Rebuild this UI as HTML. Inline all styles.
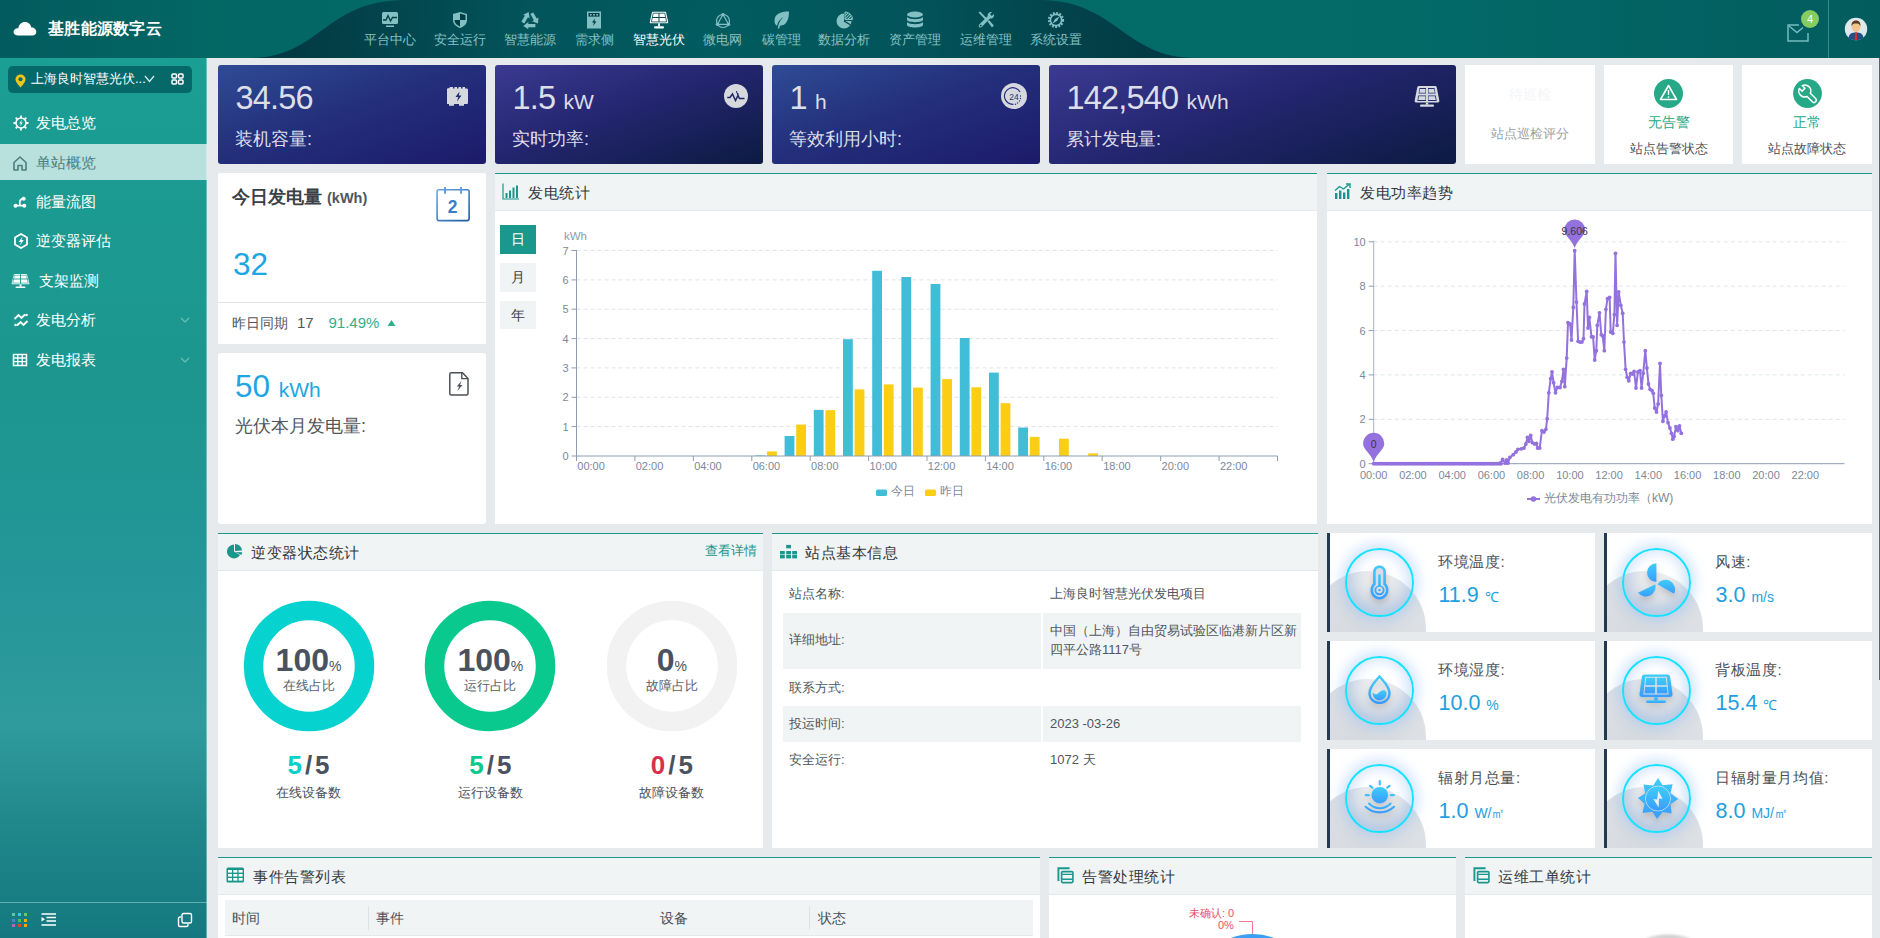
<!DOCTYPE html>
<html><head><meta charset="utf-8">
<style>
*{box-sizing:border-box;margin:0;padding:0}
html,body{width:1880px;height:938px;overflow:hidden}
body{font-family:"Liberation Sans",sans-serif;background:#e6eaed;position:relative;color:#333}
.abs{position:absolute}
#hdr{left:0;top:0;width:1880px;height:58px;background:linear-gradient(90deg,#025b5e 0%,#036764 11%,#046c69 30%,#036a68 75%,#025c5e 100%);overflow:hidden}
#side{left:0;top:58px;width:207px;height:880px;background:linear-gradient(180deg,#1b9e93 0%,#1c968f 38%,#25969a 60%,#2f9b9c 76%,#1f868a 88%,#157880 100%)}
.card{position:absolute;background:#fff}
.kpi{position:absolute;top:65px;height:99px;border-radius:3px;color:#dcdee8}
.kb{background:linear-gradient(160deg,#2f4b95 0%,#24307c 45%,#1c1a6a 100%)}
.kp{background:linear-gradient(160deg,#3b3a92 0%,#242670 45%,#0d1a42 100%)}
.kpi .v{position:absolute;left:17.5px;top:14.5px;font-size:32.5px;letter-spacing:-0.8px;white-space:nowrap;line-height:36px}
.kpi .v small{font-size:21px;letter-spacing:0}
.kpi .l{position:absolute;left:17px;top:62px;font-size:18px;white-space:nowrap;line-height:24px}
.panel{position:absolute;background:#fff;border-top:1px solid #1a968c}
.ph{height:37px;background:#f1f4f5;border-bottom:1px solid #e3e8ea;position:relative;font-size:14px;color:#333}
.ph .t{position:absolute;left:33px;top:10px;white-space:nowrap;font-size:15px;letter-spacing:0.5px;line-height:18px;color:#33373b}
</style></head><body>
<div id="hdr" class="abs">
 <svg class="abs" style="left:0;top:0" width="1880" height="58"><defs><radialGradient id="wv" gradientUnits="userSpaceOnUse" cx="720" cy="25" r="430"><stop offset="0" stop-color="#025c5f"/><stop offset="0.45" stop-color="#02545a"/><stop offset="1" stop-color="#033a43"/></radialGradient></defs><path d="M250,58 C320,58 325,0 405,0 L1040,0 C1115,0 1125,58 1195,58 Z" fill="url(#wv)"/></svg>
 <svg class="abs" style="left:13px;top:20px" width="24" height="16" viewBox="0 0 24 16"><path d="M5,15.5 C1.5,15.5 0,13 0.8,10.8 C1.5,8.8 3.5,8 5.2,8.4 C5.8,4.5 8.5,2 12,2 C15.5,2 18,4.5 18.3,7.5 C21,7.3 23.3,9.3 23.3,12 C23.3,14.2 21.5,15.5 19.5,15.5 Z" fill="#fff"/></svg>
 <div class="abs" style="left:48px;top:18.5px;font-size:16px;font-weight:bold;color:#fff;letter-spacing:0.3px">基胜能源数字云</div>
 <div id="nav"><div class="abs" style="left:349.7px;top:0;width:80px;height:58px;text-align:center"><svg class="abs" style="left:31.0px;top:11px" width="18" height="18" viewBox="0 0 18 18"><rect x="1" y="1" width="16" height="12" rx="1.5" fill="#82c0c4"/><path d="M2,9 L5,9 L7,4.5 L9.5,10 L11.5,6.5 L16,6.5" fill="none" stroke="#033d45" stroke-width="1.3"/><rect x="5" y="14.5" width="8" height="1.5" fill="#82c0c4"/></svg><div class="abs" style="left:0;top:32px;width:80px;font-size:13px;color:#86c2c5;line-height:16px">平台中心</div></div><div class="abs" style="left:420.0px;top:0;width:80px;height:58px;text-align:center"><svg class="abs" style="left:31.0px;top:11px" width="18" height="18" viewBox="0 0 18 18"><path d="M9,1 L16,3 V9 C16,13 13,15.5 9,17 C5,15.5 2,13 2,9 V3 Z" fill="#82c0c4"/><path d="M9,2.6 V9 H14.5 V3.9 Z M9,9 V15.4 C6,14.2 3.5,12.2 3.5,9 Z" fill="#033d45"/></svg><div class="abs" style="left:0;top:32px;width:80px;font-size:13px;color:#86c2c5;line-height:16px">安全运行</div></div><div class="abs" style="left:490.4px;top:0;width:80px;height:58px;text-align:center"><svg class="abs" style="left:31.0px;top:11px" width="18" height="18" viewBox="0 0 18 18"><g transform="translate(9 9.5) scale(1.3) translate(-9 -9.5)"><g><path d="M3.5,11.1 L6.6,5.7" stroke="#82c0c4" stroke-width="2.6"/><path d="M7.97,3.0 L8.7,7.8 L3.8,5.0Z" fill="#82c0c4"/></g><g transform="rotate(120 9 9.5)"><path d="M3.5,11.1 L6.6,5.7" stroke="#82c0c4" stroke-width="2.6"/><path d="M7.97,3.0 L8.7,7.8 L3.8,5.0Z" fill="#82c0c4"/></g><g transform="rotate(240 9 9.5)"><path d="M3.5,11.1 L6.6,5.7" stroke="#82c0c4" stroke-width="2.6"/><path d="M7.97,3.0 L8.7,7.8 L3.8,5.0Z" fill="#82c0c4"/></g></g></svg><div class="abs" style="left:0;top:32px;width:80px;font-size:13px;color:#86c2c5;line-height:16px">智慧能源</div></div><div class="abs" style="left:554.4px;top:0;width:80px;height:58px;text-align:center"><svg class="abs" style="left:31.0px;top:11px" width="18" height="18" viewBox="0 0 18 18"><rect x="2" y="0.5" width="14" height="17" fill="#82c0c4"/><rect x="3.5" y="2" width="11" height="3.6" fill="#033d45"/><rect x="5" y="3" width="1.6" height="1.6" fill="#82c0c4"/><rect x="8.2" y="3" width="1.6" height="1.6" fill="#82c0c4"/><rect x="11.4" y="3" width="1.6" height="1.6" fill="#82c0c4"/><path d="M10,7.5 L7,11.5 H9 L8,15 L11.5,10.5 H9.5 Z" fill="#033d45"/></svg><div class="abs" style="left:0;top:32px;width:80px;font-size:13px;color:#86c2c5;line-height:16px">需求侧</div></div><div class="abs" style="left:619.0px;top:0;width:80px;height:58px;text-align:center"><svg class="abs" style="left:30.0px;top:11px" width="20" height="18" viewBox="0 0 20 18"><path d="M4.2,0.8 H15.8 C16.6,0.8 17,1.2 17.2,2 L19.2,11 C19.4,11.8 19,12.3 18.2,12.3 H1.8 C1,12.3 0.6,11.8 0.8,11 L2.8,2 C3,1.2 3.4,0.8 4.2,0.8Z" fill="#fff"/><path d="M4.2,2.2 H15.8 L17.6,10.9 H2.4Z" fill="none" stroke="#0a4a50" stroke-width="0.8"/><path d="M10,2.2 V10.9 M3.3,6.5 H16.7" stroke="#0a4a50" stroke-width="1"/><rect x="9.1" y="12.3" width="1.8" height="3.2" fill="#fff"/><rect x="5" y="15.3" width="10" height="2.2" rx="1" fill="#fff"/></svg><div class="abs" style="left:0;top:32px;width:80px;font-size:13px;color:#ffffff;line-height:16px">智慧光伏</div></div><div class="abs" style="left:682.7px;top:0;width:80px;height:58px;text-align:center"><svg class="abs" style="left:31.0px;top:11px" width="18" height="18" viewBox="0 0 18 18"><circle cx="9" cy="10" r="6.5" fill="none" stroke="#82c0c4" stroke-width="1.2"/><path d="M9,3.5 L14.6,13.3 H3.4 Z" fill="none" stroke="#82c0c4" stroke-width="1.2"/><circle cx="9" cy="3.5" r="1.6" fill="#82c0c4"/><circle cx="3.4" cy="13.3" r="1.6" fill="#82c0c4"/><circle cx="14.6" cy="13.3" r="1.6" fill="#82c0c4"/></svg><div class="abs" style="left:0;top:32px;width:80px;font-size:13px;color:#86c2c5;line-height:16px">微电网</div></div><div class="abs" style="left:741.0px;top:0;width:80px;height:58px;text-align:center"><svg class="abs" style="left:31.0px;top:11px" width="18" height="18" viewBox="0 0 18 18"><path d="M17,0.5 C8,0.5 2.5,3 2.5,10 C2.5,12.5 3.5,14 5,14.7 C6,10 8.5,7.5 12,6 C9,8 6.8,11 5.8,17.5 H7.2 C7.5,16 7.8,15 8.2,14.5 C14,15 17,9 17,0.5Z" fill="#82c0c4"/></svg><div class="abs" style="left:0;top:32px;width:80px;font-size:13px;color:#86c2c5;line-height:16px">碳管理</div></div><div class="abs" style="left:804.4px;top:0;width:80px;height:58px;text-align:center"><svg class="abs" style="left:31.0px;top:11px" width="18" height="18" viewBox="0 0 18 18"><defs><clipPath id="pq"><path d="M10,8.5 L10,1 A7.5,7.5 0 0 1 17.5,8.5 Z"/></clipPath></defs><path d="M9,10 L9,2.5 A7.5,7.5 0 1 0 16.5,10 Z" fill="#82c0c4"/><path d="M9,10 L15.3,13.8" stroke="#033d45" stroke-width="1.3"/><path d="M10,8.5 L10,1 A7.5,7.5 0 0 1 17.5,8.5 Z" fill="none" stroke="#82c0c4" stroke-width="1"/><g clip-path="url(#pq)" stroke="#82c0c4" stroke-width="1.1"><path d="M8,4 L13,-1 M8,7 L16,-1 M9,9 L18,0 M12,9 L19,2 M15,9 L19,5"/></g></svg><div class="abs" style="left:0;top:32px;width:80px;font-size:13px;color:#86c2c5;line-height:16px">数据分析</div></div><div class="abs" style="left:875.0px;top:0;width:80px;height:58px;text-align:center"><svg class="abs" style="left:31.0px;top:11px" width="18" height="18" viewBox="0 0 18 18"><ellipse cx="9" cy="3.5" rx="8" ry="3" fill="#82c0c4"/><path d="M1,5.5 C1,9 17,9 17,5.5 V8.8 C17,12 1,12 1,8.8Z" fill="#82c0c4"/><path d="M1,10.5 C1,14 17,14 17,10.5 V13.8 C17,17.5 1,17.5 1,13.8Z" fill="#82c0c4"/></svg><div class="abs" style="left:0;top:32px;width:80px;font-size:13px;color:#86c2c5;line-height:16px">资产管理</div></div><div class="abs" style="left:945.7px;top:0;width:80px;height:58px;text-align:center"><svg class="abs" style="left:31.0px;top:11px" width="18" height="18" viewBox="0 0 18 18"><path d="M1.5,1.5 L3,0.5 L10,7.5 L8.5,9 Z" fill="#82c0c4"/><path d="M15,1 L13,3.2 L14.8,5 L17,3 C17.5,5.5 16,7.8 13,7.5 L5,15.8 C4,17 2,16.8 1.8,15 C1.7,14.3 2,13.8 2.5,13.2 L10.6,5.2 C10.3,2.3 12.5,0.5 15,1Z" fill="#82c0c4"/><path d="M10.5,10.5 L12,9 L16.8,14.5 L15,16.5Z" fill="#82c0c4"/><circle cx="3.8" cy="14.6" r="0.9" fill="#033d45"/></svg><div class="abs" style="left:0;top:32px;width:80px;font-size:13px;color:#86c2c5;line-height:16px">运维管理</div></div><div class="abs" style="left:1016.0px;top:0;width:80px;height:58px;text-align:center"><svg class="abs" style="left:31.0px;top:11px" width="18" height="18" viewBox="0 0 18 18"><circle cx="9" cy="9" r="6.8" fill="none" stroke="#82c0c4" stroke-width="2.6" stroke-dasharray="1.8 1.4"/><circle cx="9" cy="9" r="5.6" fill="none" stroke="#82c0c4" stroke-width="1.6"/><path d="M12.5,5.5 L10,10 L5.5,12.5 L8,8 Z" fill="#82c0c4"/></svg><div class="abs" style="left:0;top:32px;width:80px;font-size:13px;color:#86c2c5;line-height:16px">系统设置</div></div></div>
 <svg class="abs" style="left:1787px;top:24px" width="22" height="18" viewBox="0 0 22 18"><path d="M12,1 H1 V17 H21 V9" fill="none" stroke="#73bcc0" stroke-width="1.5"/><path d="M2,2 L10,8.5 L16,3.5" fill="none" stroke="#73bcc0" stroke-width="1.5"/></svg>
 <div class="abs" style="left:1801px;top:10px;width:18px;height:18px;border-radius:50%;background:#86cc60;color:#fff;font-size:11px;text-align:center;line-height:18px">4</div>
 <div class="abs" style="left:1828px;top:0;width:1px;height:58px;background:#2e8d8c"></div>
 <svg class="abs" style="left:1844px;top:17px" width="24" height="24" viewBox="0 0 24 24"><circle cx="12" cy="12" r="11.2" fill="#dfe9eb"/><path d="M4.5,21 C5,16.5 8,15.5 12,15.5 C16,15.5 19,16.5 19.5,21 C17.5,22.6 15,23.2 12,23.2 C9,23.2 6.5,22.6 4.5,21Z" fill="#1e4f86"/><path d="M11,15.5 L13,15.5 L13.4,23 L10.6,23Z" fill="#d8282a"/><ellipse cx="12" cy="10" rx="4.3" ry="5" fill="#f2c38a"/><path d="M7.6,9.5 C7.3,5 9.5,3.6 12,3.6 C14.5,3.6 16.7,5 16.4,9.5 C15.8,7 14,6.5 12,6.5 C10,6.5 8.2,7 7.6,9.5Z" fill="#5a3a22"/></svg>
</div>
<div id="side" class="abs"></div>
<div class="abs" style="left:8px;top:66px;width:184px;height:27px;border-radius:5px;background:#05696a"></div>
<svg class="abs" style="left:15px;top:74px" width="11" height="14" viewBox="0 0 11 14"><path d="M5.5,0.5 C2.5,0.5 0.5,2.7 0.5,5.3 C0.5,8.5 5.5,13.5 5.5,13.5 C5.5,13.5 10.5,8.5 10.5,5.3 C10.5,2.7 8.5,0.5 5.5,0.5Z" fill="#f0c419"/><circle cx="5.5" cy="5.3" r="2" fill="#05696a"/></svg>
<div class="abs" style="left:31px;top:71px;font-size:13px;color:#fff;line-height:16px;white-space:nowrap">上海良时智慧光伏...</div>
<svg class="abs" style="left:144px;top:75px" width="11" height="8" viewBox="0 0 11 8"><path d="M1,1 L5.5,6.5 L10,1" fill="none" stroke="#d8ecec" stroke-width="1.2"/></svg>
<svg class="abs" style="left:171px;top:73px" width="13" height="12" viewBox="0 0 13 12"><rect x="1" y="1" width="4.5" height="4" rx="1" fill="none" stroke="#fff" stroke-width="1.5"/><rect x="7.5" y="1" width="4.5" height="4" rx="1" fill="none" stroke="#fff" stroke-width="1.5"/><rect x="1" y="7" width="4.5" height="4" rx="1" fill="none" stroke="#fff" stroke-width="1.5"/><rect x="7.5" y="7" width="4.5" height="4" rx="1" fill="none" stroke="#fff" stroke-width="1.5"/></svg>
<div class="abs" style="left:0;top:144px;width:207px;height:36px;background:#b8e1de"></div>
<svg class="abs" style="left:12.5px;top:114.7px" width="16" height="16" viewBox="0 0 16 16"><circle cx="8" cy="8" r="5" fill="none" stroke="#ffffff" stroke-width="1.6"/><path d="M8,0.5 V3 M8,13 V15.5 M0.5,8 H3 M13,8 H15.5 M2.7,2.7 L4.4,4.4 M11.6,11.6 L13.3,13.3 M2.7,13.3 L4.4,11.6 M11.6,4.4 L13.3,2.7" stroke="#ffffff" stroke-width="1.8"/><path d="M9,4.5 L6.3,8.5 H8 L7,11.5 L9.8,7.5 H8.2Z" fill="#ffffff"/></svg>
<div class="abs" style="left:36px;top:112.7px;font-size:15px;line-height:20px;color:#ffffff;white-space:nowrap">发电总览</div>
<svg class="abs" style="left:12.0px;top:154.6px" width="16" height="16" viewBox="0 0 16 16"><path d="M2,7.5 L8,2 L14,7.5 V15 H10 V10.5 H6 V15 H2 Z" fill="none" stroke="#4b7f7e" stroke-width="1.6" stroke-linejoin="round"/></svg>
<div class="abs" style="left:36px;top:152.6px;font-size:15px;line-height:20px;color:#4b7f7e;white-space:nowrap">单站概览</div>
<svg class="abs" style="left:12.5px;top:193.5px" width="16" height="16" viewBox="0 0 16 16"><path d="M2.5,11.7 H11.3 M6.8,11.7 V8.5 C6.8,5.8 8.5,4.7 10.7,4.7" fill="none" stroke="#ffffff" stroke-width="1.7"/><circle cx="2.5" cy="11.7" r="2" fill="#ffffff"/><circle cx="11.3" cy="11.7" r="2" fill="#ffffff"/><circle cx="10.7" cy="4.7" r="2" fill="#ffffff"/></svg>
<div class="abs" style="left:36px;top:191.5px;font-size:15px;line-height:20px;color:#ffffff;white-space:nowrap">能量流图</div>
<svg class="abs" style="left:12.5px;top:233.4px" width="16" height="16" viewBox="0 0 16 16"><path d="M8,1 L14,4.5 V11.5 L8,15 L2,11.5 V4.5Z" fill="none" stroke="#ffffff" stroke-width="1.8"/><path d="M9.6,3.6 L5.6,8.9 H8 L6.8,12.4 L10.8,7.1 H8.4Z" fill="#ffffff"/></svg>
<div class="abs" style="left:36px;top:231.4px;font-size:15px;line-height:20px;color:#ffffff;white-space:nowrap">逆变器评估</div>
<svg class="abs" style="left:11.0px;top:273.3px" width="19" height="16" viewBox="0 0 19 16"><path d="M4,1 H15 C15.6,1 16,1.3 16.2,2 L18.3,10 C18.5,10.8 18.1,11.3 17.3,11.3 H1.7 C0.9,11.3 0.5,10.8 0.7,10 L2.8,2 C3,1.3 3.4,1 4,1Z" fill="#ffffff"/><path d="M9.5,1 V11.3 M1.8,6 H17.2" stroke="#1b9a90" stroke-width="0.9"/><path d="M3.6,2.3 H15.4 L17.3,10.1 H1.7Z" fill="none" stroke="#1b9a90" stroke-width="0.6"/><rect x="8.6" y="11.3" width="1.8" height="2.3" fill="#ffffff"/><rect x="4.5" y="13.4" width="10" height="1.7" rx="0.8" fill="#ffffff"/></svg>
<div class="abs" style="left:39px;top:271.3px;font-size:15px;line-height:20px;color:#ffffff;white-space:nowrap">支架监测</div>
<svg class="abs" style="left:12.5px;top:312.4px" width="16" height="16" viewBox="0 0 16 16"><path d="M1.5,7 L5.5,3 L8.5,6 L12,2.5 M4,13.5 L7.5,10 L10.5,13 L14.5,9" fill="none" stroke="#ffffff" stroke-width="1.8"/><circle cx="13.5" cy="3" r="1.3" fill="#ffffff"/><circle cx="2.5" cy="13" r="1.3" fill="#ffffff"/></svg>
<div class="abs" style="left:36px;top:310.4px;font-size:15px;line-height:20px;color:#ffffff;white-space:nowrap">发电分析</div>
<svg class="abs" style="left:180px;top:317.4px" width="10" height="6" viewBox="0 0 10 6"><path d="M1,1 L5,5 L9,1" fill="none" stroke="#6cc0b8" stroke-width="1.2"/></svg>
<svg class="abs" style="left:12.0px;top:351.6px" width="16" height="16" viewBox="0 0 16 16"><rect x="1.5" y="2.5" width="13" height="11" fill="none" stroke="#ffffff" stroke-width="1.5"/><path d="M1.5,6 H14.5 M1.5,9.7 H14.5 M5.8,2.5 V13.5 M10.2,2.5 V13.5" stroke="#ffffff" stroke-width="1.3"/></svg>
<div class="abs" style="left:36px;top:349.6px;font-size:15px;line-height:20px;color:#ffffff;white-space:nowrap">发电报表</div>
<svg class="abs" style="left:180px;top:356.6px" width="10" height="6" viewBox="0 0 10 6"><path d="M1,1 L5,5 L9,1" fill="none" stroke="#6cc0b8" stroke-width="1.2"/></svg>
<div class="abs" style="left:0;top:902px;width:207px;height:1px;background:#5fb0b0"></div>
<div class="abs" style="left:12px;top:913.0px;width:3px;height:3px;background:#5dcaa0"></div>
<div class="abs" style="left:18px;top:913.0px;width:3px;height:3px;background:#3ec8e4"></div>
<div class="abs" style="left:24px;top:913.0px;width:3px;height:3px;background:#6cc46e"></div>
<div class="abs" style="left:12px;top:918.5px;width:3px;height:3px;background:#4a84d0"></div>
<div class="abs" style="left:18px;top:918.5px;width:3px;height:3px;background:#4cc060"></div>
<div class="abs" style="left:24px;top:918.5px;width:3px;height:3px;background:#f2b200"></div>
<div class="abs" style="left:12px;top:924.0px;width:3px;height:3px;background:#c062c4"></div>
<div class="abs" style="left:18px;top:924.0px;width:3px;height:3px;background:#e84432"></div>
<div class="abs" style="left:24px;top:924.0px;width:3px;height:3px;background:#f2aa00"></div>
<svg class="abs" style="left:41px;top:913px" width="16" height="14" viewBox="0 0 16 14"><path d="M0.5,1 H15 M5.5,4.5 H15 M5.5,8 H15 M0.5,12 H15" stroke="#fff" stroke-width="1.4"/><path d="M0.5,4 L4,6.3 L0.5,8.6Z" fill="#fff"/></svg>
<svg class="abs" style="left:177px;top:912px" width="16" height="16" viewBox="0 0 16 16"><rect x="5" y="1.5" width="9.5" height="9.5" rx="1.5" fill="none" stroke="#fff" stroke-width="1.4"/><path d="M4,5 H3 C2,5 1.5,5.5 1.5,6.5 V13 C1.5,14 2,14.5 3,14.5 H9.5 C10.5,14.5 11,14 11,13 V12" fill="none" stroke="#fff" stroke-width="1.4"/></svg>
<div class="abs" style="left:206px;top:58px;width:1px;height:880px;background:rgba(255,255,255,0.35)"></div>

<!-- KPI -->
<div class="kpi kb" style="left:218px;width:268px"><div class="v">34.56</div><div class="l">装机容量:</div></div>
<div class="kpi kp" style="left:495px;width:268px"><div class="v">1.5 <small>kW</small></div><div class="l">实时功率:</div></div>
<div class="kpi kb" style="left:772px;width:268px"><div class="v">1 <small>h</small></div><div class="l">等效利用小时:</div></div>
<div class="kpi kp" style="left:1049px;width:407px"><div class="v">142,540 <small>kWh</small></div><div class="l">累计发电量:</div></div>
<div class="card" style="left:1465px;top:65px;width:130px;height:99px"></div>
<div class="card" style="left:1604px;top:65px;width:129px;height:99px"></div>
<div class="card" style="left:1742px;top:65px;width:129.6px;height:99px"></div>


<svg class="abs" style="left:447px;top:86px" width="23" height="21" viewBox="0 0 23 21"><path d="M3.5,1 h2.5 v1.5 h1.5 v-1.5 h2.5 v1.5 h1.5 v-1.5 h2.5 v1.5 h1.5 v-1.5 h2.5 v1.5 h1.5 c1,0 1.5,0.5 1.5,1.5 v12.5 c0,1 -0.5,1.5 -1.5,1.5 h-2.5 v1.8 h-5 v-1.8 h-5 v1.8 h-5 v-1.8 h-2.5 c-1,0 -1.5,-0.5 -1.5,-1.5 v-12.5 c0,-1 0.5,-1.5 1.5,-1.5 h1.5z" fill="#d5d9dd"/><path d="M12.5,5.5 L8.5,11 H11.2 L10,15.5 L14.5,9.5 H11.8Z" fill="#232c78"/></svg>
<svg class="abs" style="left:724px;top:83.5px" width="24" height="24" viewBox="0 0 24 24"><circle cx="12" cy="12" r="12" fill="#d5d9dd"/><path d="M3.2,13.5 H6 L8.5,10 L11.5,16.5 L14,11.5 L15.5,14.5 H20.5" fill="none" stroke="#1d2566" stroke-width="1.5"/><path d="M12.5,7 L13,9.5 L14.5,10 L13,10.5" fill="none" stroke="#1d2566" stroke-width="1"/></svg>
<svg class="abs" style="left:1000.5px;top:82.5px" width="26" height="26" viewBox="0 0 26 26"><circle cx="13" cy="13" r="13" fill="#d5d9dd"/><path d="M19,9 A8.3,8.3 0 1 0 12.5,21.3" fill="none" stroke="#27307a" stroke-width="1.2"/><circle cx="19.5" cy="13" r="0.7" fill="#27307a"/><circle cx="19.5" cy="15.5" r="0.7" fill="#27307a"/><circle cx="18.5" cy="18" r="0.7" fill="#27307a"/><circle cx="16.5" cy="20" r="0.7" fill="#27307a"/><circle cx="14.5" cy="21.2" r="0.7" fill="#27307a"/><text x="13" y="16.5" font-size="8.5" text-anchor="middle" fill="#27307a" font-family="Liberation Sans">24</text></svg>
<svg class="abs" style="left:1414px;top:85px" width="26" height="22" viewBox="0 0 26 22"><path d="M5,1 H21 C22,1 22.5,1.5 22.8,2.5 L25.3,15.5 C25.5,16.5 25,17.5 24,17.5 H2 C1,17.5 0.5,16.5 0.7,15.5 L3.2,2.5 C3.5,1.5 4,1 5,1Z" fill="#d5d9dd"/><path d="M5.5,3 H12 V8.5 H4.6 Z M14,3 H20.5 L21.5,8.5 H14Z M4.3,10.5 H12 V16 H3.3Z M14,10.5 H21.8 L22.7,16 H14Z" fill="#232c78"/><path d="M6,4 H11.5 V7.8 H5.3Z M14.5,4 H20 L20.8,7.8 H14.5Z M5,11.2 H11.5 V15 H4.2Z M14.5,11.2 H21 L21.8,15 H14.5Z" fill="#d5d9dd"/><rect x="11.8" y="17.5" width="2.4" height="2.2" fill="#d5d9dd"/><rect x="6" y="19.5" width="14" height="2.2" rx="1" fill="#d5d9dd"/></svg>

<div class="abs" style="left:1465px;top:86px;width:130px;text-align:center;font-size:14px;color:#f4f5f7">待巡检</div>
<div class="abs" style="left:1465px;top:124.5px;width:130px;text-align:center;font-size:13px;color:#9c9fa3">站点巡检评分</div>
<svg class="abs" style="left:1654px;top:79px" width="29" height="29" viewBox="0 0 29 29"><circle cx="14.5" cy="14.5" r="14.5" fill="#27a987"/><path d="M14.5,6.5 L22.5,20.5 H6.5Z" fill="none" stroke="#fff" stroke-width="1.6" stroke-linejoin="round"/><rect x="13.8" y="11" width="1.4" height="5" fill="#fff"/><rect x="13.8" y="17.3" width="1.4" height="1.5" fill="#fff"/></svg>
<div class="abs" style="left:1604px;top:114px;width:129px;text-align:center;font-size:14px;color:#27a987">无告警</div>
<div class="abs" style="left:1604px;top:140px;width:129px;text-align:center;font-size:13px;color:#4a5058">站点告警状态</div>
<svg class="abs" style="left:1792.7px;top:78.9px" width="29" height="29" viewBox="0 0 29 29"><circle cx="14.5" cy="14.5" r="14.4" fill="#27a987"/><path transform="translate(11.8,12) rotate(45)" d="M5.54,-2.3 L13,-2.3 A2.3,2.3 0 0 1 13,2.3 L5.54,2.3 A6,6 0 0 1 -5.66,2 L-1.8,2 L-1.8,-2 L-5.66,-2 A6,6 0 0 1 5.54,-2.3Z" fill="none" stroke="#fff" stroke-width="1.5" stroke-linejoin="round"/></svg>
<div class="abs" style="left:1742px;top:114px;width:129px;text-align:center;font-size:14px;color:#27a987">正常</div>
<div class="abs" style="left:1742px;top:140px;width:129px;text-align:center;font-size:13px;color:#4a5058">站点故障状态</div>

<!-- row 2 -->
<div class="card" style="left:218px;top:173px;width:268px;height:171px"></div>
<div class="card" style="left:218px;top:353px;width:268px;height:171px;border-radius:3px"></div>
<div class="panel" style="left:495px;top:173px;width:822px;height:351px"><div class="ph"><div class="t">发电统计</div></div></div>
<div class="panel" style="left:1327px;top:173px;width:544.6px;height:351px"><div class="ph"><div class="t">发电功率趋势</div></div></div>


<div class="abs" style="left:232px;top:186px;font-size:18px;font-weight:bold;color:#3b4045;white-space:nowrap;line-height:22px">今日发电量 <span style="font-size:14.5px;font-weight:bold;color:#50565c">(kWh)</span></div>
<svg class="abs" style="left:436px;top:187px" width="35" height="35" viewBox="0 0 35 35"><defs><linearGradient id="cal" x1="0" y1="0" x2="1" y2="1"><stop offset="0" stop-color="#69a8e8"/><stop offset="1" stop-color="#1e5a9a"/></linearGradient></defs><rect x="1.1" y="2.8" width="32" height="30.8" rx="2" fill="none" stroke="url(#cal)" stroke-width="1.6"/><path d="M9,0 V6.7 M25,0 V6.7" stroke="#5a9ae0" stroke-width="1.8"/><text x="16.7" y="25.8" font-size="17.5" font-weight="bold" text-anchor="middle" fill="#3a7cc8" font-family="Liberation Sans">2</text></svg>
<div class="abs" style="left:233px;top:246px;font-size:31.5px;color:#1ea6e3;line-height:36px">32</div>
<div class="abs" style="left:218px;top:302px;width:268px;height:1px;background:#e2e4e6"></div>
<div class="abs" style="left:232px;top:314px;font-size:14px;color:#50565c;line-height:18px;white-space:nowrap">昨日同期</div><div class="abs" style="left:297px;top:314px;font-size:15px;color:#50565c;line-height:18px;white-space:nowrap">17</div><div class="abs" style="left:328.5px;top:314px;font-size:15px;color:#2fb08c;line-height:18px;white-space:nowrap">91.49%</div>
<svg class="abs" style="left:386.5px;top:319px" width="9" height="8" viewBox="0 0 9 8"><path d="M0.5,7 L4.5,1 L8.5,7Z" fill="#2fb08c"/></svg>


<div class="abs" style="left:235px;top:368px;font-size:31.5px;color:#1ea6e3;line-height:36px;white-space:nowrap">50 <span style="font-size:21px">kWh</span></div>
<svg class="abs" style="left:449px;top:372px" width="21" height="24" viewBox="0 0 21 24"><path d="M2.3,0.8 H13.5 L19,6.5 V21.5 C19,22.5 18.5,23 17.5,23 H2.3 C1.3,23 0.8,22.5 0.8,21.5 V2.3 C0.8,1.3 1.3,0.8 2.3,0.8Z" fill="none" stroke="#4c5258" stroke-width="1.5"/><path d="M12.8,0.8 V6.6 H19" fill="none" stroke="#4c5258" stroke-width="1.4"/><path d="M12.6,8.8 L7.8,14.5 H10.2 L8.3,19 L13.5,13 H11Z" fill="#4c5258"/></svg>
<div class="abs" style="left:235px;top:415px;font-size:18px;color:#50565c;white-space:nowrap;line-height:22px">光伏本月发电量:</div>


<svg class="abs" style="left:502px;top:183px" width="18" height="17" viewBox="0 0 18 17"><path d="M1,0.5 V16 H17" fill="none" stroke="#1a968c" stroke-width="1.2"/><rect x="3.5" y="10" width="2" height="5" fill="#1a968c"/><rect x="7" y="7.5" width="2" height="7.5" fill="#1a968c"/><rect x="10.5" y="4.5" width="2" height="10.5" fill="#1a968c"/><rect x="14" y="2.5" width="2" height="12.5" fill="#1a968c"/></svg>
<svg class="abs" style="left:1334px;top:183px" width="17" height="16" viewBox="0 0 17 16"><rect x="1" y="10" width="2.4" height="6" fill="#1a968c"/><rect x="5" y="7.5" width="2.4" height="8.5" fill="#1a968c"/><rect x="9" y="9.5" width="2.4" height="6.5" fill="#1a968c"/><rect x="13" y="6" width="2.4" height="10" fill="#1a968c"/><path d="M1,7.5 L5.5,3.5 L9.5,6 L15,1.5" fill="none" stroke="#1a968c" stroke-width="1.4"/><path d="M12,1 H16 V5" fill="none" stroke="#1a968c" stroke-width="1.4"/></svg>


<div class="abs" style="left:500px;top:225px;width:36px;height:29px;background:#1a988e;color:#fff;font-size:14px;text-align:center;line-height:29px">日</div>
<div class="abs" style="left:500px;top:263px;width:36px;height:29px;background:#f1f4f5;color:#3a3f44;font-size:14px;text-align:center;line-height:29px">月</div>
<div class="abs" style="left:500px;top:301px;width:36px;height:28px;background:#f1f4f5;color:#3a3f44;font-size:14px;text-align:center;line-height:28px">年</div>

<svg class="abs" style="left:0;top:0" width="1880" height="938"><line x1="576.5" y1="426.6" x2="1277.5" y2="426.6" stroke="#dde5ea" stroke-dasharray="4 3"/><line x1="576.5" y1="397.3" x2="1277.5" y2="397.3" stroke="#dde5ea" stroke-dasharray="4 3"/><line x1="576.5" y1="367.9" x2="1277.5" y2="367.9" stroke="#dde5ea" stroke-dasharray="4 3"/><line x1="576.5" y1="338.6" x2="1277.5" y2="338.6" stroke="#dde5ea" stroke-dasharray="4 3"/><line x1="576.5" y1="309.2" x2="1277.5" y2="309.2" stroke="#dde5ea" stroke-dasharray="4 3"/><line x1="576.5" y1="279.9" x2="1277.5" y2="279.9" stroke="#dde5ea" stroke-dasharray="4 3"/><line x1="576.5" y1="250.5" x2="1277.5" y2="250.5" stroke="#dde5ea" stroke-dasharray="4 3"/><rect x="755.4" y="455.4" width="9.8" height="0.6" fill="#41bdd8"/><rect x="767.0" y="451.4" width="9.8" height="4.6" fill="#fbcd14"/><rect x="784.6" y="436.0" width="9.8" height="20.0" fill="#41bdd8"/><rect x="796.2" y="424.6" width="9.8" height="31.4" fill="#fbcd14"/><rect x="813.8" y="409.9" width="9.8" height="46.1" fill="#41bdd8"/><rect x="825.4" y="410.2" width="9.8" height="45.8" fill="#fbcd14"/><rect x="843.0" y="339.2" width="9.8" height="116.8" fill="#41bdd8"/><rect x="854.6" y="389.4" width="9.8" height="66.6" fill="#fbcd14"/><rect x="872.2" y="270.8" width="9.8" height="185.2" fill="#41bdd8"/><rect x="883.8" y="384.4" width="9.8" height="71.6" fill="#fbcd14"/><rect x="901.4" y="277.0" width="9.8" height="179.0" fill="#41bdd8"/><rect x="913.0" y="387.6" width="9.8" height="68.4" fill="#fbcd14"/><rect x="930.6" y="284.0" width="9.8" height="172.0" fill="#41bdd8"/><rect x="942.2" y="379.1" width="9.8" height="76.9" fill="#fbcd14"/><rect x="959.8" y="338.0" width="9.8" height="118.0" fill="#41bdd8"/><rect x="971.4" y="387.3" width="9.8" height="68.7" fill="#fbcd14"/><rect x="989.0" y="372.6" width="9.8" height="83.4" fill="#41bdd8"/><rect x="1000.6" y="403.2" width="9.8" height="52.8" fill="#fbcd14"/><rect x="1018.2" y="427.5" width="9.8" height="28.5" fill="#41bdd8"/><rect x="1029.8" y="436.9" width="9.8" height="19.1" fill="#fbcd14"/><rect x="1059.0" y="438.7" width="9.8" height="17.3" fill="#fbcd14"/><rect x="1088.2" y="453.4" width="9.8" height="2.6" fill="#fbcd14"/><line x1="576.5" y1="250" x2="576.5" y2="456.0" stroke="#8e9db2" stroke-width="1"/><line x1="576.5" y1="456.0" x2="1277.5" y2="456.0" stroke="#8e9db2" stroke-width="1"/><line x1="571.5" y1="456.0" x2="576.5" y2="456.0" stroke="#8e9db2"/><text x="568.5" y="460.0" font-size="11" text-anchor="end" fill="#7d889a" font-family="Liberation Sans">0</text><line x1="571.5" y1="426.6" x2="576.5" y2="426.6" stroke="#8e9db2"/><text x="568.5" y="430.6" font-size="11" text-anchor="end" fill="#7d889a" font-family="Liberation Sans">1</text><line x1="571.5" y1="397.3" x2="576.5" y2="397.3" stroke="#8e9db2"/><text x="568.5" y="401.3" font-size="11" text-anchor="end" fill="#7d889a" font-family="Liberation Sans">2</text><line x1="571.5" y1="367.9" x2="576.5" y2="367.9" stroke="#8e9db2"/><text x="568.5" y="371.9" font-size="11" text-anchor="end" fill="#7d889a" font-family="Liberation Sans">3</text><line x1="571.5" y1="338.6" x2="576.5" y2="338.6" stroke="#8e9db2"/><text x="568.5" y="342.6" font-size="11" text-anchor="end" fill="#7d889a" font-family="Liberation Sans">4</text><line x1="571.5" y1="309.2" x2="576.5" y2="309.2" stroke="#8e9db2"/><text x="568.5" y="313.2" font-size="11" text-anchor="end" fill="#7d889a" font-family="Liberation Sans">5</text><line x1="571.5" y1="279.9" x2="576.5" y2="279.9" stroke="#8e9db2"/><text x="568.5" y="283.9" font-size="11" text-anchor="end" fill="#7d889a" font-family="Liberation Sans">6</text><line x1="571.5" y1="250.5" x2="576.5" y2="250.5" stroke="#8e9db2"/><text x="568.5" y="254.5" font-size="11" text-anchor="end" fill="#7d889a" font-family="Liberation Sans">7</text><line x1="576.5" y1="456.0" x2="576.5" y2="461.0" stroke="#8e9db2"/><line x1="634.9" y1="456.0" x2="634.9" y2="461.0" stroke="#8e9db2"/><line x1="693.3" y1="456.0" x2="693.3" y2="461.0" stroke="#8e9db2"/><line x1="751.8" y1="456.0" x2="751.8" y2="461.0" stroke="#8e9db2"/><line x1="810.2" y1="456.0" x2="810.2" y2="461.0" stroke="#8e9db2"/><line x1="868.6" y1="456.0" x2="868.6" y2="461.0" stroke="#8e9db2"/><line x1="927.0" y1="456.0" x2="927.0" y2="461.0" stroke="#8e9db2"/><line x1="985.4" y1="456.0" x2="985.4" y2="461.0" stroke="#8e9db2"/><line x1="1043.8" y1="456.0" x2="1043.8" y2="461.0" stroke="#8e9db2"/><line x1="1102.2" y1="456.0" x2="1102.2" y2="461.0" stroke="#8e9db2"/><line x1="1160.7" y1="456.0" x2="1160.7" y2="461.0" stroke="#8e9db2"/><line x1="1219.1" y1="456.0" x2="1219.1" y2="461.0" stroke="#8e9db2"/><line x1="1277.5" y1="456.0" x2="1277.5" y2="461.0" stroke="#8e9db2"/><text x="591.1" y="470.0" font-size="11" text-anchor="middle" fill="#7d889a" font-family="Liberation Sans">00:00</text><text x="649.5" y="470.0" font-size="11" text-anchor="middle" fill="#7d889a" font-family="Liberation Sans">02:00</text><text x="707.9" y="470.0" font-size="11" text-anchor="middle" fill="#7d889a" font-family="Liberation Sans">04:00</text><text x="766.4" y="470.0" font-size="11" text-anchor="middle" fill="#7d889a" font-family="Liberation Sans">06:00</text><text x="824.8" y="470.0" font-size="11" text-anchor="middle" fill="#7d889a" font-family="Liberation Sans">08:00</text><text x="883.2" y="470.0" font-size="11" text-anchor="middle" fill="#7d889a" font-family="Liberation Sans">10:00</text><text x="941.6" y="470.0" font-size="11" text-anchor="middle" fill="#7d889a" font-family="Liberation Sans">12:00</text><text x="1000.0" y="470.0" font-size="11" text-anchor="middle" fill="#7d889a" font-family="Liberation Sans">14:00</text><text x="1058.4" y="470.0" font-size="11" text-anchor="middle" fill="#7d889a" font-family="Liberation Sans">16:00</text><text x="1116.9" y="470.0" font-size="11" text-anchor="middle" fill="#7d889a" font-family="Liberation Sans">18:00</text><text x="1175.3" y="470.0" font-size="11" text-anchor="middle" fill="#7d889a" font-family="Liberation Sans">20:00</text><text x="1233.7" y="470.0" font-size="11" text-anchor="middle" fill="#7d889a" font-family="Liberation Sans">22:00</text><text x="564" y="240" font-size="11.5" fill="#8d9bb0" font-family="Liberation Sans">kWh</text><rect x="876" y="489.5" width="11" height="6.5" rx="1.5" fill="#41bdd8"/><rect x="925" y="489.5" width="11" height="6.5" rx="1.5" fill="#fbcd14"/></svg><div class="abs" style="left:891px;top:483px;font-size:12px;color:#7d889a;line-height:16px">今日</div><div class="abs" style="left:940px;top:483px;font-size:12px;color:#7d889a;line-height:16px">昨日</div>
<svg class="abs" style="left:0;top:0" width="1880" height="938"><line x1="1373.7" y1="419.3" x2="1844.5" y2="419.3" stroke="#dde5ea" stroke-dasharray="4 3"/><line x1="1373.7" y1="374.9" x2="1844.5" y2="374.9" stroke="#dde5ea" stroke-dasharray="4 3"/><line x1="1373.7" y1="330.6" x2="1844.5" y2="330.6" stroke="#dde5ea" stroke-dasharray="4 3"/><line x1="1373.7" y1="286.2" x2="1844.5" y2="286.2" stroke="#dde5ea" stroke-dasharray="4 3"/><line x1="1373.7" y1="241.8" x2="1844.5" y2="241.8" stroke="#dde5ea" stroke-dasharray="4 3"/><line x1="1373.7" y1="240.8" x2="1373.7" y2="463.7" stroke="#a8b4c2"/><line x1="1373.7" y1="463.7" x2="1844.5" y2="463.7" stroke="#8e9db2"/><line x1="1368.7" y1="463.7" x2="1373.7" y2="463.7" stroke="#8e9db2"/><text x="1365.7" y="467.7" font-size="11" text-anchor="end" fill="#7d889a" font-family="Liberation Sans">0</text><line x1="1368.7" y1="419.3" x2="1373.7" y2="419.3" stroke="#8e9db2"/><text x="1365.7" y="423.3" font-size="11" text-anchor="end" fill="#7d889a" font-family="Liberation Sans">2</text><line x1="1368.7" y1="374.9" x2="1373.7" y2="374.9" stroke="#8e9db2"/><text x="1365.7" y="378.9" font-size="11" text-anchor="end" fill="#7d889a" font-family="Liberation Sans">4</text><line x1="1368.7" y1="330.6" x2="1373.7" y2="330.6" stroke="#8e9db2"/><text x="1365.7" y="334.6" font-size="11" text-anchor="end" fill="#7d889a" font-family="Liberation Sans">6</text><line x1="1368.7" y1="286.2" x2="1373.7" y2="286.2" stroke="#8e9db2"/><text x="1365.7" y="290.2" font-size="11" text-anchor="end" fill="#7d889a" font-family="Liberation Sans">8</text><line x1="1368.7" y1="241.8" x2="1373.7" y2="241.8" stroke="#8e9db2"/><text x="1365.7" y="245.8" font-size="11" text-anchor="end" fill="#7d889a" font-family="Liberation Sans">10</text><text x="1373.7" y="478.7" font-size="11" text-anchor="middle" fill="#7d889a" font-family="Liberation Sans">00:00</text><text x="1412.9" y="478.7" font-size="11" text-anchor="middle" fill="#7d889a" font-family="Liberation Sans">02:00</text><text x="1452.2" y="478.7" font-size="11" text-anchor="middle" fill="#7d889a" font-family="Liberation Sans">04:00</text><text x="1491.4" y="478.7" font-size="11" text-anchor="middle" fill="#7d889a" font-family="Liberation Sans">06:00</text><text x="1530.6" y="478.7" font-size="11" text-anchor="middle" fill="#7d889a" font-family="Liberation Sans">08:00</text><text x="1569.9" y="478.7" font-size="11" text-anchor="middle" fill="#7d889a" font-family="Liberation Sans">10:00</text><text x="1609.1" y="478.7" font-size="11" text-anchor="middle" fill="#7d889a" font-family="Liberation Sans">12:00</text><text x="1648.3" y="478.7" font-size="11" text-anchor="middle" fill="#7d889a" font-family="Liberation Sans">14:00</text><text x="1687.6" y="478.7" font-size="11" text-anchor="middle" fill="#7d889a" font-family="Liberation Sans">16:00</text><text x="1726.8" y="478.7" font-size="11" text-anchor="middle" fill="#7d889a" font-family="Liberation Sans">18:00</text><text x="1766.0" y="478.7" font-size="11" text-anchor="middle" fill="#7d889a" font-family="Liberation Sans">20:00</text><text x="1805.3" y="478.7" font-size="11" text-anchor="middle" fill="#7d889a" font-family="Liberation Sans">22:00</text><path d="M1373.7,463.7 L1375.3,463.7 L1377.0,463.7 L1378.6,463.7 L1380.2,463.7 L1381.9,463.7 L1383.5,463.7 L1385.1,463.7 L1386.8,463.7 L1388.4,463.7 L1390.0,463.7 L1391.7,463.7 L1393.3,463.7 L1395.0,463.7 L1396.6,463.7 L1398.2,463.7 L1399.9,463.7 L1401.5,463.7 L1403.1,463.7 L1404.8,463.7 L1406.4,463.7 L1408.0,463.7 L1409.7,463.7 L1411.3,463.7 L1412.9,463.7 L1414.6,463.7 L1416.2,463.7 L1417.8,463.7 L1419.5,463.7 L1421.1,463.7 L1422.7,463.7 L1424.4,463.7 L1426.0,463.7 L1427.6,463.7 L1429.3,463.7 L1430.9,463.7 L1432.5,463.7 L1434.2,463.7 L1435.8,463.7 L1437.5,463.7 L1439.1,463.7 L1440.7,463.7 L1442.4,463.7 L1444.0,463.7 L1445.6,463.7 L1447.3,463.7 L1448.9,463.7 L1450.5,463.7 L1452.2,463.7 L1453.8,463.7 L1455.4,463.7 L1457.1,463.7 L1458.7,463.7 L1460.3,463.7 L1462.0,463.7 L1463.6,463.7 L1465.2,463.7 L1466.9,463.7 L1468.5,463.7 L1470.1,463.7 L1471.8,463.7 L1473.4,463.7 L1475.1,463.7 L1476.7,463.7 L1478.3,463.7 L1480.0,463.7 L1481.6,463.7 L1483.2,463.7 L1484.9,463.7 L1486.5,463.7 L1488.1,463.7 L1489.8,463.7 L1491.4,463.7 L1493.0,463.7 L1494.7,463.7 L1496.3,463.7 L1497.9,463.7 L1499.6,463.7 L1501.2,463.7 L1500.0,463.2 L1502.7,459.5 L1505.3,463.2 L1506.7,460.0 L1508.0,463.2 L1509.9,457.3 L1513.3,454.7 L1516.0,452.0 L1517.9,449.3 L1521.3,448.8 L1524.0,448.0 L1525.9,444.0 L1527.5,437.3 L1528.8,441.3 L1530.7,435.5 L1532.3,442.7 L1534.7,444.0 L1536.5,443.5 L1537.6,448.0 L1539.7,448.0 L1541.9,430.7 L1544.0,432.0 L1545.9,429.3 L1547.2,418.7 L1548.8,392.8 L1550.7,378.7 L1552.0,372.0 L1553.6,382.7 L1555.5,392.8 L1557.3,387.5 L1560.0,387.5 L1561.9,381.3 L1563.5,369.3 L1564.8,386.7 L1566.7,358.1 L1568.0,322.7 L1570.1,324.0 L1571.5,340.0 L1573.3,307.5 L1574.7,250.7 L1576.5,302.1 L1578.1,341.3 L1580.0,342.1 L1581.9,342.1 L1583.5,338.7 L1584.5,304.0 L1586.7,291.5 L1588.0,328.0 L1589.3,317.3 L1591.5,336.8 L1593.1,336.8 L1594.7,360.0 L1596.3,350.7 L1597.3,325.3 L1599.5,312.8 L1601.3,334.7 L1602.7,336.0 L1604.3,350.7 L1605.9,309.3 L1607.5,298.7 L1609.6,297.3 L1610.7,332.0 L1612.8,333.3 L1614.4,314.7 L1615.5,253.3 L1617.1,325.3 L1618.7,292.0 L1620.8,305.3 L1622.7,313.3 L1624.0,342.1 L1625.6,369.3 L1627.2,377.3 L1628.8,380.8 L1630.7,373.3 L1632.5,374.1 L1634.1,371.5 L1636.0,388.0 L1637.9,372.0 L1640.0,370.7 L1641.6,388.0 L1643.2,373.3 L1645.3,350.7 L1646.9,368.0 L1648.5,384.0 L1650.1,389.3 L1652.0,390.7 L1653.3,393.3 L1654.7,408.0 L1656.5,412.0 L1658.1,404.0 L1660.0,363.5 L1661.3,395.5 L1662.9,421.3 L1664.5,416.0 L1666.1,412.0 L1668.0,422.7 L1669.9,428.0 L1671.5,433.3 L1672.8,439.2 L1674.1,436.5 L1676.0,426.7 L1677.9,430.7 L1679.5,425.9 L1681.3,433.3" fill="none" stroke="#9472de" stroke-width="2" stroke-linejoin="round"/><circle cx="1373.7" cy="463.7" r="1.9" fill="#9472de"/><circle cx="1375.3" cy="463.7" r="1.9" fill="#9472de"/><circle cx="1377.0" cy="463.7" r="1.9" fill="#9472de"/><circle cx="1378.6" cy="463.7" r="1.9" fill="#9472de"/><circle cx="1380.2" cy="463.7" r="1.9" fill="#9472de"/><circle cx="1381.9" cy="463.7" r="1.9" fill="#9472de"/><circle cx="1383.5" cy="463.7" r="1.9" fill="#9472de"/><circle cx="1385.1" cy="463.7" r="1.9" fill="#9472de"/><circle cx="1386.8" cy="463.7" r="1.9" fill="#9472de"/><circle cx="1388.4" cy="463.7" r="1.9" fill="#9472de"/><circle cx="1390.0" cy="463.7" r="1.9" fill="#9472de"/><circle cx="1391.7" cy="463.7" r="1.9" fill="#9472de"/><circle cx="1393.3" cy="463.7" r="1.9" fill="#9472de"/><circle cx="1395.0" cy="463.7" r="1.9" fill="#9472de"/><circle cx="1396.6" cy="463.7" r="1.9" fill="#9472de"/><circle cx="1398.2" cy="463.7" r="1.9" fill="#9472de"/><circle cx="1399.9" cy="463.7" r="1.9" fill="#9472de"/><circle cx="1401.5" cy="463.7" r="1.9" fill="#9472de"/><circle cx="1403.1" cy="463.7" r="1.9" fill="#9472de"/><circle cx="1404.8" cy="463.7" r="1.9" fill="#9472de"/><circle cx="1406.4" cy="463.7" r="1.9" fill="#9472de"/><circle cx="1408.0" cy="463.7" r="1.9" fill="#9472de"/><circle cx="1409.7" cy="463.7" r="1.9" fill="#9472de"/><circle cx="1411.3" cy="463.7" r="1.9" fill="#9472de"/><circle cx="1412.9" cy="463.7" r="1.9" fill="#9472de"/><circle cx="1414.6" cy="463.7" r="1.9" fill="#9472de"/><circle cx="1416.2" cy="463.7" r="1.9" fill="#9472de"/><circle cx="1417.8" cy="463.7" r="1.9" fill="#9472de"/><circle cx="1419.5" cy="463.7" r="1.9" fill="#9472de"/><circle cx="1421.1" cy="463.7" r="1.9" fill="#9472de"/><circle cx="1422.7" cy="463.7" r="1.9" fill="#9472de"/><circle cx="1424.4" cy="463.7" r="1.9" fill="#9472de"/><circle cx="1426.0" cy="463.7" r="1.9" fill="#9472de"/><circle cx="1427.6" cy="463.7" r="1.9" fill="#9472de"/><circle cx="1429.3" cy="463.7" r="1.9" fill="#9472de"/><circle cx="1430.9" cy="463.7" r="1.9" fill="#9472de"/><circle cx="1432.5" cy="463.7" r="1.9" fill="#9472de"/><circle cx="1434.2" cy="463.7" r="1.9" fill="#9472de"/><circle cx="1435.8" cy="463.7" r="1.9" fill="#9472de"/><circle cx="1437.5" cy="463.7" r="1.9" fill="#9472de"/><circle cx="1439.1" cy="463.7" r="1.9" fill="#9472de"/><circle cx="1440.7" cy="463.7" r="1.9" fill="#9472de"/><circle cx="1442.4" cy="463.7" r="1.9" fill="#9472de"/><circle cx="1444.0" cy="463.7" r="1.9" fill="#9472de"/><circle cx="1445.6" cy="463.7" r="1.9" fill="#9472de"/><circle cx="1447.3" cy="463.7" r="1.9" fill="#9472de"/><circle cx="1448.9" cy="463.7" r="1.9" fill="#9472de"/><circle cx="1450.5" cy="463.7" r="1.9" fill="#9472de"/><circle cx="1452.2" cy="463.7" r="1.9" fill="#9472de"/><circle cx="1453.8" cy="463.7" r="1.9" fill="#9472de"/><circle cx="1455.4" cy="463.7" r="1.9" fill="#9472de"/><circle cx="1457.1" cy="463.7" r="1.9" fill="#9472de"/><circle cx="1458.7" cy="463.7" r="1.9" fill="#9472de"/><circle cx="1460.3" cy="463.7" r="1.9" fill="#9472de"/><circle cx="1462.0" cy="463.7" r="1.9" fill="#9472de"/><circle cx="1463.6" cy="463.7" r="1.9" fill="#9472de"/><circle cx="1465.2" cy="463.7" r="1.9" fill="#9472de"/><circle cx="1466.9" cy="463.7" r="1.9" fill="#9472de"/><circle cx="1468.5" cy="463.7" r="1.9" fill="#9472de"/><circle cx="1470.1" cy="463.7" r="1.9" fill="#9472de"/><circle cx="1471.8" cy="463.7" r="1.9" fill="#9472de"/><circle cx="1473.4" cy="463.7" r="1.9" fill="#9472de"/><circle cx="1475.1" cy="463.7" r="1.9" fill="#9472de"/><circle cx="1476.7" cy="463.7" r="1.9" fill="#9472de"/><circle cx="1478.3" cy="463.7" r="1.9" fill="#9472de"/><circle cx="1480.0" cy="463.7" r="1.9" fill="#9472de"/><circle cx="1481.6" cy="463.7" r="1.9" fill="#9472de"/><circle cx="1483.2" cy="463.7" r="1.9" fill="#9472de"/><circle cx="1484.9" cy="463.7" r="1.9" fill="#9472de"/><circle cx="1486.5" cy="463.7" r="1.9" fill="#9472de"/><circle cx="1488.1" cy="463.7" r="1.9" fill="#9472de"/><circle cx="1489.8" cy="463.7" r="1.9" fill="#9472de"/><circle cx="1491.4" cy="463.7" r="1.9" fill="#9472de"/><circle cx="1493.0" cy="463.7" r="1.9" fill="#9472de"/><circle cx="1494.7" cy="463.7" r="1.9" fill="#9472de"/><circle cx="1496.3" cy="463.7" r="1.9" fill="#9472de"/><circle cx="1497.9" cy="463.7" r="1.9" fill="#9472de"/><circle cx="1499.6" cy="463.7" r="1.9" fill="#9472de"/><circle cx="1501.2" cy="463.7" r="1.9" fill="#9472de"/><circle cx="1500.0" cy="463.2" r="1.9" fill="#9472de"/><circle cx="1502.7" cy="459.5" r="1.9" fill="#9472de"/><circle cx="1505.3" cy="463.2" r="1.9" fill="#9472de"/><circle cx="1506.7" cy="460.0" r="1.9" fill="#9472de"/><circle cx="1508.0" cy="463.2" r="1.9" fill="#9472de"/><circle cx="1509.9" cy="457.3" r="1.9" fill="#9472de"/><circle cx="1513.3" cy="454.7" r="1.9" fill="#9472de"/><circle cx="1516.0" cy="452.0" r="1.9" fill="#9472de"/><circle cx="1517.9" cy="449.3" r="1.9" fill="#9472de"/><circle cx="1521.3" cy="448.8" r="1.9" fill="#9472de"/><circle cx="1524.0" cy="448.0" r="1.9" fill="#9472de"/><circle cx="1525.9" cy="444.0" r="1.9" fill="#9472de"/><circle cx="1527.5" cy="437.3" r="1.9" fill="#9472de"/><circle cx="1528.8" cy="441.3" r="1.9" fill="#9472de"/><circle cx="1530.7" cy="435.5" r="1.9" fill="#9472de"/><circle cx="1532.3" cy="442.7" r="1.9" fill="#9472de"/><circle cx="1534.7" cy="444.0" r="1.9" fill="#9472de"/><circle cx="1536.5" cy="443.5" r="1.9" fill="#9472de"/><circle cx="1537.6" cy="448.0" r="1.9" fill="#9472de"/><circle cx="1539.7" cy="448.0" r="1.9" fill="#9472de"/><circle cx="1541.9" cy="430.7" r="1.9" fill="#9472de"/><circle cx="1544.0" cy="432.0" r="1.9" fill="#9472de"/><circle cx="1545.9" cy="429.3" r="1.9" fill="#9472de"/><circle cx="1547.2" cy="418.7" r="1.9" fill="#9472de"/><circle cx="1548.8" cy="392.8" r="1.9" fill="#9472de"/><circle cx="1550.7" cy="378.7" r="1.9" fill="#9472de"/><circle cx="1552.0" cy="372.0" r="1.9" fill="#9472de"/><circle cx="1553.6" cy="382.7" r="1.9" fill="#9472de"/><circle cx="1555.5" cy="392.8" r="1.9" fill="#9472de"/><circle cx="1557.3" cy="387.5" r="1.9" fill="#9472de"/><circle cx="1560.0" cy="387.5" r="1.9" fill="#9472de"/><circle cx="1561.9" cy="381.3" r="1.9" fill="#9472de"/><circle cx="1563.5" cy="369.3" r="1.9" fill="#9472de"/><circle cx="1564.8" cy="386.7" r="1.9" fill="#9472de"/><circle cx="1566.7" cy="358.1" r="1.9" fill="#9472de"/><circle cx="1568.0" cy="322.7" r="1.9" fill="#9472de"/><circle cx="1570.1" cy="324.0" r="1.9" fill="#9472de"/><circle cx="1571.5" cy="340.0" r="1.9" fill="#9472de"/><circle cx="1573.3" cy="307.5" r="1.9" fill="#9472de"/><circle cx="1574.7" cy="250.7" r="1.9" fill="#9472de"/><circle cx="1576.5" cy="302.1" r="1.9" fill="#9472de"/><circle cx="1578.1" cy="341.3" r="1.9" fill="#9472de"/><circle cx="1580.0" cy="342.1" r="1.9" fill="#9472de"/><circle cx="1581.9" cy="342.1" r="1.9" fill="#9472de"/><circle cx="1583.5" cy="338.7" r="1.9" fill="#9472de"/><circle cx="1584.5" cy="304.0" r="1.9" fill="#9472de"/><circle cx="1586.7" cy="291.5" r="1.9" fill="#9472de"/><circle cx="1588.0" cy="328.0" r="1.9" fill="#9472de"/><circle cx="1589.3" cy="317.3" r="1.9" fill="#9472de"/><circle cx="1591.5" cy="336.8" r="1.9" fill="#9472de"/><circle cx="1593.1" cy="336.8" r="1.9" fill="#9472de"/><circle cx="1594.7" cy="360.0" r="1.9" fill="#9472de"/><circle cx="1596.3" cy="350.7" r="1.9" fill="#9472de"/><circle cx="1597.3" cy="325.3" r="1.9" fill="#9472de"/><circle cx="1599.5" cy="312.8" r="1.9" fill="#9472de"/><circle cx="1601.3" cy="334.7" r="1.9" fill="#9472de"/><circle cx="1602.7" cy="336.0" r="1.9" fill="#9472de"/><circle cx="1604.3" cy="350.7" r="1.9" fill="#9472de"/><circle cx="1605.9" cy="309.3" r="1.9" fill="#9472de"/><circle cx="1607.5" cy="298.7" r="1.9" fill="#9472de"/><circle cx="1609.6" cy="297.3" r="1.9" fill="#9472de"/><circle cx="1610.7" cy="332.0" r="1.9" fill="#9472de"/><circle cx="1612.8" cy="333.3" r="1.9" fill="#9472de"/><circle cx="1614.4" cy="314.7" r="1.9" fill="#9472de"/><circle cx="1615.5" cy="253.3" r="1.9" fill="#9472de"/><circle cx="1617.1" cy="325.3" r="1.9" fill="#9472de"/><circle cx="1618.7" cy="292.0" r="1.9" fill="#9472de"/><circle cx="1620.8" cy="305.3" r="1.9" fill="#9472de"/><circle cx="1622.7" cy="313.3" r="1.9" fill="#9472de"/><circle cx="1624.0" cy="342.1" r="1.9" fill="#9472de"/><circle cx="1625.6" cy="369.3" r="1.9" fill="#9472de"/><circle cx="1627.2" cy="377.3" r="1.9" fill="#9472de"/><circle cx="1628.8" cy="380.8" r="1.9" fill="#9472de"/><circle cx="1630.7" cy="373.3" r="1.9" fill="#9472de"/><circle cx="1632.5" cy="374.1" r="1.9" fill="#9472de"/><circle cx="1634.1" cy="371.5" r="1.9" fill="#9472de"/><circle cx="1636.0" cy="388.0" r="1.9" fill="#9472de"/><circle cx="1637.9" cy="372.0" r="1.9" fill="#9472de"/><circle cx="1640.0" cy="370.7" r="1.9" fill="#9472de"/><circle cx="1641.6" cy="388.0" r="1.9" fill="#9472de"/><circle cx="1643.2" cy="373.3" r="1.9" fill="#9472de"/><circle cx="1645.3" cy="350.7" r="1.9" fill="#9472de"/><circle cx="1646.9" cy="368.0" r="1.9" fill="#9472de"/><circle cx="1648.5" cy="384.0" r="1.9" fill="#9472de"/><circle cx="1650.1" cy="389.3" r="1.9" fill="#9472de"/><circle cx="1652.0" cy="390.7" r="1.9" fill="#9472de"/><circle cx="1653.3" cy="393.3" r="1.9" fill="#9472de"/><circle cx="1654.7" cy="408.0" r="1.9" fill="#9472de"/><circle cx="1656.5" cy="412.0" r="1.9" fill="#9472de"/><circle cx="1658.1" cy="404.0" r="1.9" fill="#9472de"/><circle cx="1660.0" cy="363.5" r="1.9" fill="#9472de"/><circle cx="1661.3" cy="395.5" r="1.9" fill="#9472de"/><circle cx="1662.9" cy="421.3" r="1.9" fill="#9472de"/><circle cx="1664.5" cy="416.0" r="1.9" fill="#9472de"/><circle cx="1666.1" cy="412.0" r="1.9" fill="#9472de"/><circle cx="1668.0" cy="422.7" r="1.9" fill="#9472de"/><circle cx="1669.9" cy="428.0" r="1.9" fill="#9472de"/><circle cx="1671.5" cy="433.3" r="1.9" fill="#9472de"/><circle cx="1672.8" cy="439.2" r="1.9" fill="#9472de"/><circle cx="1674.1" cy="436.5" r="1.9" fill="#9472de"/><circle cx="1676.0" cy="426.7" r="1.9" fill="#9472de"/><circle cx="1677.9" cy="430.7" r="1.9" fill="#9472de"/><circle cx="1679.5" cy="425.9" r="1.9" fill="#9472de"/><circle cx="1681.3" cy="433.3" r="1.9" fill="#9472de"/><path d="M1373.7,462 C1370.7,452.99 1363.1000000000001,449.81 1363.1000000000001,443.45 A10.6,10.6 0 1 1 1384.3,443.45 C1384.3,449.81 1376.7,452.99 1373.7,462Z" fill="#9472de"/><text x="1373.7" y="448" font-size="10.5" text-anchor="middle" fill="#3a3440" font-family="Liberation Sans">0</text><path d="M1574.7,248 C1571.7,239.16000000000003 1564.3,236.04000000000002 1564.3,229.8 A10.4,10.4 0 1 1 1585.1000000000001,229.8 C1585.1000000000001,236.04000000000002 1577.7,239.16000000000003 1574.7,248Z" fill="#9472de"/><text x="1574.7" y="234.5" font-size="10.5" text-anchor="middle" fill="#3a3440" font-family="Liberation Sans">9.606</text><line x1="1527" y1="499" x2="1540" y2="499" stroke="#9472de" stroke-width="2"/><circle cx="1533.5" cy="499" r="2.8" fill="#9472de"/></svg><div class="abs" style="left:1544px;top:490px;font-size:12px;color:#7d889a;line-height:16px;white-space:nowrap">光伏发电有功功率（kW)</div>
<!-- row 3 -->
<div class="panel" style="left:218px;top:533px;width:545px;height:315px"><div class="ph"><div class="t">逆变器状态统计</div></div></div>
<div class="panel" style="left:772px;top:533px;width:545.5px;height:315px"><div class="ph"><div class="t">站点基本信息</div></div></div>
<div class="card" style="left:1327px;top:533px;width:268px;height:99px;border-left:3px solid #243a52"></div>
<div class="card" style="left:1604px;top:533px;width:267.6px;height:99px;border-left:3px solid #243a52"></div>
<div class="card" style="left:1327px;top:641px;width:268px;height:99px;border-left:3px solid #243a52"></div>
<div class="card" style="left:1604px;top:641px;width:267.6px;height:99px;border-left:3px solid #243a52"></div>
<div class="card" style="left:1327px;top:749px;width:268px;height:99px;border-left:3px solid #243a52"></div>
<div class="card" style="left:1604px;top:749px;width:267.6px;height:99px;border-left:3px solid #243a52"></div>


<svg class="abs" style="left:226.5px;top:543.8px" width="16" height="16" viewBox="0 0 16 16"><path d="M7,7.5 L7,0.5 A7,7 0 1 0 13.06,11 Z" fill="#1a968c"/><path d="M8,7 L8,0 A7,7 0 0 1 14.97,6.39 Z" fill="#1a968c"/><path d="M8.3,8 L15.2,8.37 A7,7 0 0 1 14.5,10.96 Z" fill="#1a968c"/></svg>
<div class="abs" style="left:705px;top:543px;font-size:13px;color:#1a968c;line-height:16px;white-space:nowrap">查看详情</div>

<svg class="abs" style="left:242.5px;top:600.4px" width="132" height="132" viewBox="0 0 132 132"><circle cx="66" cy="66" r="55.5" fill="none" stroke="#06d3cf" stroke-width="19.5"/></svg>
<div class="abs" style="left:248.5px;top:642px;width:120px;text-align:center;font-size:32px;font-weight:bold;color:#4a5260;line-height:36px;white-space:nowrap">100<span style="font-size:14px;font-weight:normal">%</span></div>
<div class="abs" style="left:248.5px;top:677px;width:120px;text-align:center;font-size:13px;color:#5a6068;line-height:18px">在线占比</div>
<div class="abs" style="left:248.5px;top:748px;width:120px;text-align:center;font-size:26px;font-weight:bold;color:#4a5260;line-height:30px;white-space:nowrap;letter-spacing:3px;text-indent:3px;margin-top:1.5px"><span style="color:#06cfcc">5</span>/5</div>
<div class="abs" style="left:248.5px;top:784px;width:120px;text-align:center;font-size:13px;color:#4a5058;line-height:18px">在线设备数</div>
<svg class="abs" style="left:424.3px;top:600.4px" width="132" height="132" viewBox="0 0 132 132"><circle cx="66" cy="66" r="55.5" fill="none" stroke="#0ac98e" stroke-width="19.5"/></svg>
<div class="abs" style="left:430.3px;top:642px;width:120px;text-align:center;font-size:32px;font-weight:bold;color:#4a5260;line-height:36px;white-space:nowrap">100<span style="font-size:14px;font-weight:normal">%</span></div>
<div class="abs" style="left:430.3px;top:677px;width:120px;text-align:center;font-size:13px;color:#5a6068;line-height:18px">运行占比</div>
<div class="abs" style="left:430.3px;top:748px;width:120px;text-align:center;font-size:26px;font-weight:bold;color:#4a5260;line-height:30px;white-space:nowrap;letter-spacing:3px;text-indent:3px;margin-top:1.5px"><span style="color:#0ac98e">5</span>/5</div>
<div class="abs" style="left:430.3px;top:784px;width:120px;text-align:center;font-size:13px;color:#4a5058;line-height:18px">运行设备数</div>
<svg class="abs" style="left:605.8px;top:600.4px" width="132" height="132" viewBox="0 0 132 132"><circle cx="66" cy="66" r="55.5" fill="none" stroke="#f2f2f2" stroke-width="19.5"/></svg>
<div class="abs" style="left:611.8px;top:642px;width:120px;text-align:center;font-size:32px;font-weight:bold;color:#4a5260;line-height:36px;white-space:nowrap">0<span style="font-size:14px;font-weight:normal">%</span></div>
<div class="abs" style="left:611.8px;top:677px;width:120px;text-align:center;font-size:13px;color:#5a6068;line-height:18px">故障占比</div>
<div class="abs" style="left:611.8px;top:748px;width:120px;text-align:center;font-size:26px;font-weight:bold;color:#4a5260;line-height:30px;white-space:nowrap;letter-spacing:3px;text-indent:3px;margin-top:1.5px"><span style="color:#d8304c">0</span>/5</div>
<div class="abs" style="left:611.8px;top:784px;width:120px;text-align:center;font-size:13px;color:#4a5058;line-height:18px">故障设备数</div>

<svg class="abs" style="left:780px;top:544px" width="17" height="15" viewBox="0 0 17 15"><rect x="6.2" y="0.9" width="4.8" height="3.4" fill="#1a968c"/><rect x="0" y="7" width="4.8" height="3.4" fill="#1a968c"/><rect x="6.2" y="7" width="4.8" height="3.4" fill="#1a968c"/><rect x="12.2" y="7" width="4.8" height="3.4" fill="#1a968c"/><rect x="0" y="11" width="4.8" height="3.4" fill="#1a968c"/><rect x="6.2" y="11" width="4.8" height="3.4" fill="#1a968c"/><rect x="12.2" y="11" width="4.8" height="3.4" fill="#1a968c"/></svg>
<div class="abs" style="left:783px;top:613px;width:258px;height:55.5px;background:#f1f4f5"></div>
<div class="abs" style="left:1043px;top:613px;width:258px;height:55.5px;background:#f1f4f5"></div>
<div class="abs" style="left:783px;top:706px;width:258px;height:35.5px;background:#f1f4f5"></div>
<div class="abs" style="left:1043px;top:706px;width:258px;height:35.5px;background:#f1f4f5"></div>

<div class="abs" style="left:789px;top:585.3px;font-size:13px;color:#50565c;line-height:18px;white-space:nowrap">站点名称:</div>
<div class="abs" style="left:1050px;top:585.3px;font-size:13px;color:#50565c;line-height:18px;white-space:nowrap">上海良时智慧光伏发电项目</div>
<div class="abs" style="left:789px;top:631.4px;font-size:13px;color:#50565c;line-height:18px;white-space:nowrap">详细地址:</div>
<div class="abs" style="left:789px;top:678.5px;font-size:13px;color:#50565c;line-height:18px;white-space:nowrap">联系方式:</div>
<div class="abs" style="left:789px;top:715.4px;font-size:13px;color:#50565c;line-height:18px;white-space:nowrap">投运时间:</div>
<div class="abs" style="left:1050px;top:715.4px;font-size:13px;color:#50565c;line-height:18px;white-space:nowrap">2023 -03-26</div>
<div class="abs" style="left:789px;top:751.0px;font-size:13px;color:#50565c;line-height:18px;white-space:nowrap">安全运行:</div>
<div class="abs" style="left:1050px;top:751.0px;font-size:13px;color:#50565c;line-height:18px;white-space:nowrap">1072 天</div>
<div class="abs" style="left:1050px;top:622px;width:250px;font-size:13px;color:#50565c;line-height:18.7px">中国（上海）自由贸易试验区临港新片区新四平公路1117号</div>






<!--WSTART--><svg width="0" height="0" style="position:absolute"><defs><linearGradient id="wg" x1="0" y1="0" x2="0" y2="1"><stop offset="0" stop-color="#3fcdf8"/><stop offset="1" stop-color="#3a9cff"/></linearGradient><linearGradient id="wg2" x1="0" y1="0" x2="0" y2="1" gradientUnits="objectBoundingBox"><stop offset="0" stop-color="#3fb8fb"/><stop offset="1" stop-color="#3a9cff"/></linearGradient></defs></svg>
<div class="abs" style="left:1330px;top:533px;width:265px;height:99px;overflow:hidden"><div class="abs" style="left:-20px;top:38px;width:116px;height:116px;border-radius:50%;background:radial-gradient(circle at 40% 60%,#d6d9de 0%,#dcdfe3 60%,#dfe2e6 100%)"></div><div class="abs" style="left:14.9px;top:15.2px;width:68.8px;height:68.8px;border-radius:50%;border:2.4px solid #16e2ff;box-shadow:0 0 13px 4px rgba(130,185,255,0.42), inset 0 -3px 14px 4px rgba(100,160,240,0.33);background:radial-gradient(circle at 50% 35%,rgba(255,255,255,0.55) 0%,rgba(255,255,255,0) 70%)"></div><svg class="abs" style="left:39.8px;top:31.5px;filter:drop-shadow(0 4px 3px rgba(0,0,0,0.16))" width="19" height="35" viewBox="0 0 19 35"><path d="M9.5,0.5 C13,0.5 15.9,3.2 15.9,6.5 V18.6 C17.4,20.2 18.5,22.5 18.5,25 C18.5,30.2 14.5,34.5 9.5,34.5 C4.5,34.5 0.5,30.2 0.5,25 C0.5,22.5 1.6,20.2 3.1,18.6 V6.5 C3.1,3.2 6,0.5 9.5,0.5Z" fill="url(#wg)"/><path d="M9.5,3 C11.6,3 13.3,4.5 13.3,6.5 V19.8 C14.9,21 15.9,22.9 15.9,25 C15.9,28.7 13.1,31.8 9.5,31.8 C5.9,31.8 3.1,28.7 3.1,25 C3.1,22.9 4.1,21 5.7,19.8 V6.5 C5.7,4.5 7.4,3 9.5,3Z" fill="#d9dde3"/><path d="M8.2,9.5 H10.8 V20.5 C13.2,21.2 14.6,23 14.6,25 C14.6,27.9 12.3,30.3 9.5,30.3 C6.7,30.3 4.4,27.9 4.4,25 C4.4,23 5.8,21.2 8.2,20.5Z" fill="url(#wg)"/><circle cx="9.5" cy="25" r="3.2" fill="#d9dde3"/><circle cx="9.5" cy="25" r="1.3" fill="url(#wg)"/></svg><div class="abs" style="left:108px;top:19px;font-size:15px;letter-spacing:0.6px;color:#4a4f55;line-height:19px;white-space:nowrap">环境温度:</div><div class="abs" style="left:108.5px;top:49px;font-size:21.5px;color:#1f9ee0;line-height:26px;white-space:nowrap">11.9 <span style="font-size:14px">℃</span></div></div>
<div class="abs" style="left:1607px;top:533px;width:264.6px;height:99px;overflow:hidden"><div class="abs" style="left:-20px;top:38px;width:116px;height:116px;border-radius:50%;background:radial-gradient(circle at 40% 60%,#d6d9de 0%,#dcdfe3 60%,#dfe2e6 100%)"></div><div class="abs" style="left:14.9px;top:15.2px;width:68.8px;height:68.8px;border-radius:50%;border:2.4px solid #16e2ff;box-shadow:0 0 13px 4px rgba(130,185,255,0.42), inset 0 -3px 14px 4px rgba(100,160,240,0.33);background:radial-gradient(circle at 50% 35%,rgba(255,255,255,0.55) 0%,rgba(255,255,255,0) 70%)"></div><svg class="abs" style="left:31.2px;top:29.7px;filter:drop-shadow(0 4px 3px rgba(0,0,0,0.16))" width="38" height="36" viewBox="0 0 38 36"><path d="M18.4,0.3 A9.35,9.35 0 0 0 18.4,19Z" fill="url(#wg)"/><path d="M19.4,21.2 A9.6,9.6 0 0 1 36,30.8Z" fill="url(#wg)"/><path d="M17.3,21.2 A9.9,9.9 0 0 1 0,29.8Z" fill="url(#wg)"/></svg><div class="abs" style="left:108px;top:19px;font-size:15px;letter-spacing:0.6px;color:#4a4f55;line-height:19px;white-space:nowrap">风速:</div><div class="abs" style="left:108.5px;top:49px;font-size:21.5px;color:#1f9ee0;line-height:26px;white-space:nowrap">3.0 <span style="font-size:14px">m/s</span></div></div>
<div class="abs" style="left:1330px;top:641px;width:265px;height:99px;overflow:hidden"><div class="abs" style="left:-20px;top:38px;width:116px;height:116px;border-radius:50%;background:radial-gradient(circle at 40% 60%,#d6d9de 0%,#dcdfe3 60%,#dfe2e6 100%)"></div><div class="abs" style="left:14.9px;top:15.2px;width:68.8px;height:68.8px;border-radius:50%;border:2.4px solid #16e2ff;box-shadow:0 0 13px 4px rgba(130,185,255,0.42), inset 0 -3px 14px 4px rgba(100,160,240,0.33);background:radial-gradient(circle at 50% 35%,rgba(255,255,255,0.55) 0%,rgba(255,255,255,0) 70%)"></div><svg class="abs" style="left:37.8px;top:33.8px;filter:drop-shadow(0 4px 3px rgba(0,0,0,0.16))" width="23" height="29" viewBox="0 0 23 29"><path d="M11.5,1.5 C14.5,5.5 21.5,11 21.5,18.3 C21.5,23.8 17,28 11.5,28 C6,28 1.5,23.8 1.5,18.3 C1.5,11 8.5,5.5 11.5,1.5Z" fill="none" stroke="url(#wg)" stroke-width="2.4"/><path d="M4.6,17.5 C6.5,20 9,19.8 10.8,17.8 C12.6,15.8 14.8,14.5 16.8,15.5 C18.8,16.5 19,19 17.9,21.2 C16.5,24 14.2,25.3 11.4,25.3 C7.3,25.3 4.5,22 4.6,17.5Z" fill="url(#wg)"/></svg><div class="abs" style="left:108px;top:19px;font-size:15px;letter-spacing:0.6px;color:#4a4f55;line-height:19px;white-space:nowrap">环境湿度:</div><div class="abs" style="left:108.5px;top:49px;font-size:21.5px;color:#1f9ee0;line-height:26px;white-space:nowrap">10.0 <span style="font-size:14px">%</span></div></div>
<div class="abs" style="left:1607px;top:641px;width:264.6px;height:99px;overflow:hidden"><div class="abs" style="left:-20px;top:38px;width:116px;height:116px;border-radius:50%;background:radial-gradient(circle at 40% 60%,#d6d9de 0%,#dcdfe3 60%,#dfe2e6 100%)"></div><div class="abs" style="left:14.9px;top:15.2px;width:68.8px;height:68.8px;border-radius:50%;border:2.4px solid #16e2ff;box-shadow:0 0 13px 4px rgba(130,185,255,0.42), inset 0 -3px 14px 4px rgba(100,160,240,0.33);background:radial-gradient(circle at 50% 35%,rgba(255,255,255,0.55) 0%,rgba(255,255,255,0) 70%)"></div><svg class="abs" style="left:32.3px;top:33.1px;filter:drop-shadow(0 4px 3px rgba(0,0,0,0.16))" width="34" height="30" viewBox="0 0 34 30"><path d="M5.5,0.5 H28.5 C30,0.5 31,1.4 31.2,3 L33.5,20 C33.7,21.7 32.7,23 31,23 H3 C1.3,23 0.3,21.7 0.5,20 L2.8,3 C3,1.4 4,0.5 5.5,0.5Z" fill="url(#wg)"/><path d="M6.3,2.8 H27.7 L29.6,20.6 H4.4Z" fill="#d9e0e8"/><path d="M7.2,3.8 H16.2 V11.3 H6.3Z M17.8,3.8 H26.8 L27.7,11.3 H17.8Z M6.1,12.8 H16.2 V19.6 H5.3Z M17.8,12.8 H27.9 L28.7,19.6 H17.8Z" fill="url(#wg)"/><rect x="15.2" y="23" width="3.6" height="3.5" fill="url(#wg)"/><rect x="7" y="26.2" width="20" height="2.8" rx="1.4" fill="url(#wg)"/></svg><div class="abs" style="left:108px;top:19px;font-size:15px;letter-spacing:0.6px;color:#4a4f55;line-height:19px;white-space:nowrap">背板温度:</div><div class="abs" style="left:108.5px;top:49px;font-size:21.5px;color:#1f9ee0;line-height:26px;white-space:nowrap">15.4 <span style="font-size:14px">℃</span></div></div>
<div class="abs" style="left:1330px;top:749px;width:265px;height:99px;overflow:hidden"><div class="abs" style="left:-20px;top:38px;width:116px;height:116px;border-radius:50%;background:radial-gradient(circle at 40% 60%,#d6d9de 0%,#dcdfe3 60%,#dfe2e6 100%)"></div><div class="abs" style="left:14.9px;top:15.2px;width:68.8px;height:68.8px;border-radius:50%;border:2.4px solid #16e2ff;box-shadow:0 0 13px 4px rgba(130,185,255,0.42), inset 0 -3px 14px 4px rgba(100,160,240,0.33);background:radial-gradient(circle at 50% 35%,rgba(255,255,255,0.55) 0%,rgba(255,255,255,0) 70%)"></div><svg class="abs" style="left:33.5px;top:31.0px;filter:drop-shadow(0 4px 3px rgba(0,0,0,0.16))" width="32" height="34" viewBox="0 0 32 34"><circle cx="15.8" cy="15.2" r="8.3" fill="url(#wg)"/><path d="M15.8,1.2 V4.4 M6,5.8 L8.4,7.6 M25.6,5.8 L23.2,7.6 M1.8,15.2 H4.8 M26.8,15.2 H29.8" stroke="#3fc2fa" stroke-width="2.2" stroke-linecap="round"/><path d="M5,23.6 C11,29.8 20.6,29.8 26.6,23.6 M1.6,26.8 C9.5,34.2 22.1,34.2 30,26.8" fill="none" stroke="url(#wg2)" stroke-width="2.2" stroke-linecap="round"/></svg><div class="abs" style="left:108px;top:19px;font-size:15px;letter-spacing:0.6px;color:#4a4f55;line-height:19px;white-space:nowrap">辐射月总量:</div><div class="abs" style="left:108.5px;top:49px;font-size:21.5px;color:#1f9ee0;line-height:26px;white-space:nowrap">1.0 <span style="font-size:14px">W/㎡</span></div></div>
<div class="abs" style="left:1607px;top:749px;width:264.6px;height:99px;overflow:hidden"><div class="abs" style="left:-20px;top:38px;width:116px;height:116px;border-radius:50%;background:radial-gradient(circle at 40% 60%,#d6d9de 0%,#dcdfe3 60%,#dfe2e6 100%)"></div><div class="abs" style="left:14.9px;top:15.2px;width:68.8px;height:68.8px;border-radius:50%;border:2.4px solid #16e2ff;box-shadow:0 0 13px 4px rgba(130,185,255,0.42), inset 0 -3px 14px 4px rgba(100,160,240,0.33);background:radial-gradient(circle at 50% 35%,rgba(255,255,255,0.55) 0%,rgba(255,255,255,0) 70%)"></div><svg class="abs" style="left:30.8px;top:28.8px;filter:drop-shadow(0 4px 3px rgba(0,0,0,0.16))" width="40" height="41" viewBox="0 0 40 41"><path d="M20.1,0 L24.5,7.2 L34.7,6.2 L32.4,15.3 L40.2,21.1 L32.6,26.3 L33.6,35.6 L24.6,34 L19,40.9 L14.5,33.8 L4.5,35 L6.5,25.8 L0,20.1 L7.2,15.2 L5.5,6.6 L15.3,7.4Z" fill="url(#wg)"/><circle cx="20" cy="20.5" r="12.4" fill="none" stroke="#dfe8f0" stroke-width="0.9"/><circle cx="20" cy="20.5" r="11.9" fill="url(#wg)"/><path d="M20.3,12.8 L24.6,21 L21,20.5 L20.6,29.6 L15.4,21 L19.1,21.4Z" fill="#eaf0f6"/></svg><div class="abs" style="left:108px;top:19px;font-size:15px;letter-spacing:0.6px;color:#4a4f55;line-height:19px;white-space:nowrap">日辐射量月均值:</div><div class="abs" style="left:108.5px;top:49px;font-size:21.5px;color:#1f9ee0;line-height:26px;white-space:nowrap">8.0 <span style="font-size:14px">MJ/㎡</span></div></div>
<!--WEND-->
<!-- row 4 -->
<div class="panel" style="left:218px;top:857px;width:822px;height:90px"><div class="ph"><div class="t" style="left:35px">事件告警列表</div></div></div>
<div class="panel" style="left:1049px;top:857px;width:407px;height:90px"><div class="ph"><div class="t">告警处理统计</div></div></div>
<div class="panel" style="left:1465px;top:857px;width:406.6px;height:90px"><div class="ph"><div class="t">运维工单统计</div></div></div>

<svg class="abs" style="left:226px;top:867px" width="18" height="16" viewBox="0 0 18 16"><rect x="0.5" y="0.5" width="17.5" height="15" rx="1.5" fill="#1a968c"/><g fill="#fff"><rect x="2" y="3" width="4" height="2.6"/><rect x="7.3" y="3" width="4" height="2.6"/><rect x="12.6" y="3" width="4" height="2.6"/><rect x="2" y="7" width="4" height="2.6"/><rect x="7.3" y="7" width="4" height="2.6"/><rect x="12.6" y="7" width="4" height="2.6"/><rect x="2" y="11" width="4" height="2.6"/><rect x="7.3" y="11" width="4" height="2.6"/><rect x="12.6" y="11" width="4" height="2.6"/></g></svg>
<div class="abs" style="left:225px;top:900px;width:808px;height:36px;background:#f1f4f5;border-bottom:1px solid #e4e8eb"></div>
<div class="abs" style="left:368px;top:906px;width:1px;height:24px;background:#dde2e6"></div>
<div class="abs" style="left:809px;top:906px;width:1px;height:24px;background:#dde2e6"></div>
<div class="abs" style="left:232px;top:909px;font-size:14px;color:#4a5058;line-height:18px">时间</div>
<div class="abs" style="left:376px;top:909px;font-size:14px;color:#4a5058;line-height:18px">事件</div>
<div class="abs" style="left:660px;top:909px;font-size:14px;color:#4a5058;line-height:18px">设备</div>
<div class="abs" style="left:818px;top:909px;font-size:14px;color:#4a5058;line-height:18px">状态</div>
<svg class="abs" style="left:1056.5px;top:867px" width="17" height="17" viewBox="0 0 17 17"><path d="M1.4,14 V1.3 H12.6" fill="none" stroke="#1a968c" stroke-width="1.9"/><rect x="4.6" y="4.6" width="11.3" height="11" rx="1" fill="none" stroke="#1a968c" stroke-width="1.6"/><path d="M4.6,7.4 H15.9 M4.6,12.3 H15.9" stroke="#1a968c" stroke-width="1.4"/></svg>
<svg class="abs" style="left:1473px;top:867px" width="17" height="17" viewBox="0 0 17 17"><path d="M1.4,14 V1.3 H12.6" fill="none" stroke="#1a968c" stroke-width="1.9"/><rect x="4.6" y="4.6" width="11.3" height="11" rx="1" fill="none" stroke="#1a968c" stroke-width="1.6"/><path d="M4.6,7.4 H15.9 M4.6,12.3 H15.9" stroke="#1a968c" stroke-width="1.4"/></svg>
<div class="abs" style="left:1189px;top:906px;font-size:11px;color:#e8506a;line-height:14px;white-space:nowrap">未确认: 0</div>
<div class="abs" style="left:1218px;top:918px;font-size:11px;color:#e8506a;line-height:14px;white-space:nowrap">0%</div>
<svg class="abs" style="left:1049px;top:895px" width="407" height="43" viewBox="1049 895 407 43"><path d="M1239,921.5 H1252.5 V934" fill="none" stroke="#f07a90" stroke-width="1"/><circle cx="1252.6" cy="995" r="61" fill="#3a9ff5"/></svg>
<svg class="abs" style="left:1465px;top:895px" width="406" height="43" viewBox="1465 895 406 43"><defs><filter id="bl"><feGaussianBlur stdDeviation="1"/></filter></defs><circle cx="1668" cy="995.5" r="61" fill="#d2d2d2" filter="url(#bl)"/></svg>

<div class="abs" style="left:1879px;top:58px;width:1px;height:622px;background:#5a6470"></div>
</body></html>
